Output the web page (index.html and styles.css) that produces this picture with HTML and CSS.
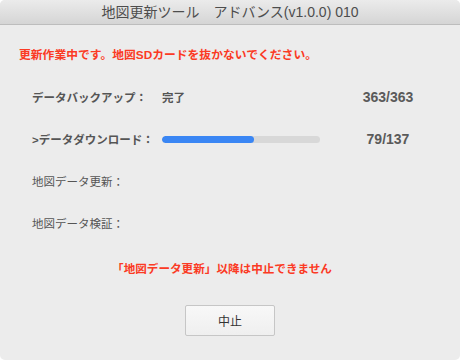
FILE: index.html
```html
<!DOCTYPE html>
<html lang="ja">
<head>
    <meta charset="UTF-8">
    <title>地図更新ツール</title>
    <link rel="stylesheet" href="styles.css">
</head>
<body>
    <div class="window">
        <div class="titlebar">地図更新ツール　アドバンス(v1.0.0) 010</div>
        <div class="content">
            <p class="warning">更新作業中です。地図SDカードを抜かないでください。</p>
            <div class="steps">
                <div class="step bold">データバックアップ：</div>
                <div class="status bold">完了</div>
                <div class="count">363/363</div>

                <div class="step bold">&gt;データダウンロード：</div>
                <div class="status"><div class="progress"><div class="progress-fill" style="width: 58%;"></div></div></div>
                <div class="count">79/137</div>

                <div class="step">地図データ更新：</div>
                <div class="status"></div>
                <div class="count"></div>

                <div class="step">地図データ検証：</div>
                <div class="status"></div>
                <div class="count"></div>
            </div>
            <p class="notice">「地図データ更新」以降は中止できません</p>
            <div class="actions">
                <button type="button">中止</button>
            </div>
        </div>
    </div>
</body>
</html>
```

FILE: styles.css
```css
body {
    margin: 0;
    padding: 0;
    background: #ffffff;
    font-family: "Liberation Sans", "Noto Sans CJK JP", sans-serif;
}
.window {
    width: 460px;
    height: 360px;
    background: #ececec;
    border-radius: 5px;
    overflow: hidden;
    display: flex;
    flex-direction: column;
}
.titlebar {
    height: 24px;
    line-height: 25px;
    border-bottom: 1px solid #bdbdbd;
    background: linear-gradient(#ebebeb, #d5d5d5);
    text-align: center;
    font-size: 14px;
    color: #4d4d4d;
}
.content {
    display: flex;
    flex-direction: column;
}
.warning {
    margin: 22px 0 0 19px;
    font-size: 11.8px;
    line-height: 16px;
    font-weight: bold;
    color: #fb3a24;
}
.steps {
    margin-top: 13px;
    padding-left: 32px;
    display: grid;
    grid-template-columns: 130px 158px 136px;
    grid-auto-rows: 42px;
    align-items: center;
    font-size: 11.5px;
    color: #555;
}
.steps .bold {
    font-weight: bold;
    color: #555;
}
.count {
    text-align: center;
    font-weight: bold;
    font-size: 14px;
    color: #5a5a5a;
}
.progress {
    height: 7px;
    border-radius: 4px;
    background: #d8d8d8;
    overflow: hidden;
}
.progress-fill {
    height: 100%;
    border-radius: 4px;
    background: #3a86f4;
}
.notice {
    margin: 17px 0 0;
    padding-right: 16px;
    text-align: center;
    font-size: 11.6px;
    line-height: 16px;
    font-weight: bold;
    color: #fb3a24;
}
.actions {
    margin-top: 28px;
    display: flex;
    justify-content: center;
}
.actions button {
    width: 90px;
    height: 31px;
    border: 1px solid #c6c6c6;
    border-radius: 2px;
    background: linear-gradient(#f8f8f8, #efefef);
    font-family: "Liberation Sans", "Noto Sans CJK JP", sans-serif;
    font-size: 12px;
    color: #333;
}
```
